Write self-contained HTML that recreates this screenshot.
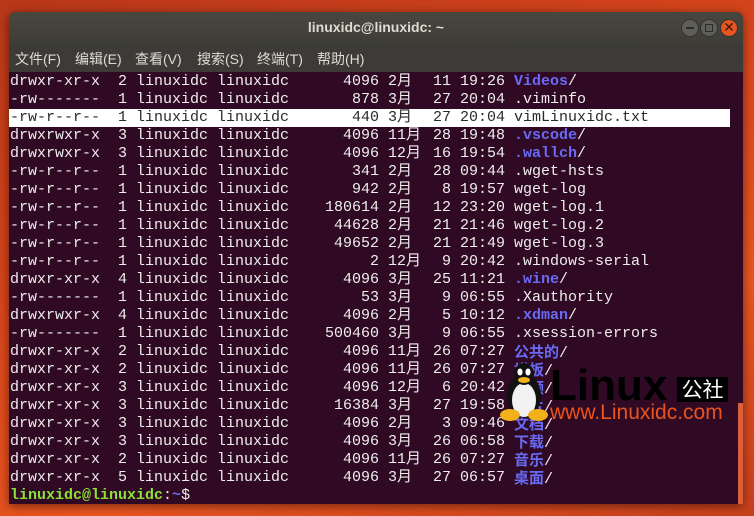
<!DOCTYPE html>
<html><head><meta charset="utf-8"><style>
*{margin:0;padding:0}
body{width:754px;height:516px;overflow:hidden;position:relative;background:linear-gradient(160deg,#b8371a 0%,#d8461c 40%,#e95420 70%,#c8401c 100%);font-family:"Liberation Sans","Noto Sans CJK SC",sans-serif}
.win{position:absolute;left:9px;top:12px;width:734px;height:492px;background:#300a24;border-radius:7px 7px 0 0;overflow:hidden;box-shadow:0 2px 10px rgba(0,0,0,.5)}
.title{position:absolute;left:0;top:0;width:734px;height:34px;background:linear-gradient(#48473f,#3d3c37);color:#dfdbd2;font-size:14px;font-weight:bold;text-align:center;line-height:30px}
.menu{position:absolute;left:0;top:34px;width:734px;height:26px;background:#3c3b37;color:#dfdbd2;font-size:14px;line-height:26px}
.menu span{position:absolute;top:0}
.btn{position:absolute;top:7px;width:16px;height:16px;border-radius:50%;background:#5f5e59;border:1px solid #333}
.term{position:absolute;left:0;top:60px;width:734px;height:432px}
.r{position:absolute;left:0;height:18px;width:721px;font-family:"Liberation Mono","Noto Sans CJK SC",monospace;font-size:15px;line-height:18px;color:#eeeeec;white-space:pre}
.r span{position:absolute;top:0}
.a{left:1px}.s{left:280px;width:90px;text-align:right}.m{left:379px}.d{left:424px;width:18px;text-align:right}.t{left:451px}.f{left:505px}
.b{color:#6a6af5;font-weight:bold}
.hl{background:#fff;color:#2a2a2a}
.cj{font-family:"Noto Sans CJK SC",sans-serif;font-weight:bold}
</style></head><body>
<div class="win">
<div class="title">linuxidc@linuxidc: ~</div>
<div class="btn" style="left:672px"><div style="position:absolute;left:4px;top:7px;width:8px;height:2px;background:#2b2b2b"></div></div>
<div class="btn" style="left:691px"><div style="position:absolute;left:4px;top:4px;width:6px;height:6px;border:1px solid #2b2b2b"></div></div>
<div class="btn" style="left:711px;background:#e9541f;color:#3a1a10;font-size:14px;line-height:15px;text-align:center">✕</div>
<div class="menu"><span style="left:6px">文件(F)</span><span style="left:66px">编辑(E)</span><span style="left:126px">查看(V)</span><span style="left:188px">搜索(S)</span><span style="left:248px">终端(T)</span><span style="left:308px">帮助(H)</span></div>
<div class="term">
<div class="r" style="top:1px"><span class="a">drwxr-xr-x  2 linuxidc linuxidc</span><span class="s">4096</span><span class="m">2月</span><span class="d">11</span><span class="t">19:26</span><span class="f"><b class="b">Videos</b>/</span></div>
<div class="r" style="top:19px"><span class="a">-rw-------  1 linuxidc linuxidc</span><span class="s">878</span><span class="m">3月</span><span class="d">27</span><span class="t">20:04</span><span class="f">.viminfo</span></div>
<div class="r hl" style="top:37px"><span class="a">-rw-r--r--  1 linuxidc linuxidc</span><span class="s">440</span><span class="m">3月</span><span class="d">27</span><span class="t">20:04</span><span class="f">vimLinuxidc.txt</span></div>
<div class="r" style="top:55px"><span class="a">drwxrwxr-x  3 linuxidc linuxidc</span><span class="s">4096</span><span class="m">11月</span><span class="d">28</span><span class="t">19:48</span><span class="f"><b class="b">.vscode</b>/</span></div>
<div class="r" style="top:73px"><span class="a">drwxrwxr-x  3 linuxidc linuxidc</span><span class="s">4096</span><span class="m">12月</span><span class="d">16</span><span class="t">19:54</span><span class="f"><b class="b">.wallch</b>/</span></div>
<div class="r" style="top:91px"><span class="a">-rw-r--r--  1 linuxidc linuxidc</span><span class="s">341</span><span class="m">2月</span><span class="d">28</span><span class="t">09:44</span><span class="f">.wget-hsts</span></div>
<div class="r" style="top:109px"><span class="a">-rw-r--r--  1 linuxidc linuxidc</span><span class="s">942</span><span class="m">2月</span><span class="d">8</span><span class="t">19:57</span><span class="f">wget-log</span></div>
<div class="r" style="top:127px"><span class="a">-rw-r--r--  1 linuxidc linuxidc</span><span class="s">180614</span><span class="m">2月</span><span class="d">12</span><span class="t">23:20</span><span class="f">wget-log.1</span></div>
<div class="r" style="top:145px"><span class="a">-rw-r--r--  1 linuxidc linuxidc</span><span class="s">44628</span><span class="m">2月</span><span class="d">21</span><span class="t">21:46</span><span class="f">wget-log.2</span></div>
<div class="r" style="top:163px"><span class="a">-rw-r--r--  1 linuxidc linuxidc</span><span class="s">49652</span><span class="m">2月</span><span class="d">21</span><span class="t">21:49</span><span class="f">wget-log.3</span></div>
<div class="r" style="top:181px"><span class="a">-rw-r--r--  1 linuxidc linuxidc</span><span class="s">2</span><span class="m">12月</span><span class="d">9</span><span class="t">20:42</span><span class="f">.windows-serial</span></div>
<div class="r" style="top:199px"><span class="a">drwxr-xr-x  4 linuxidc linuxidc</span><span class="s">4096</span><span class="m">3月</span><span class="d">25</span><span class="t">11:21</span><span class="f"><b class="b">.wine</b>/</span></div>
<div class="r" style="top:217px"><span class="a">-rw-------  1 linuxidc linuxidc</span><span class="s">53</span><span class="m">3月</span><span class="d">9</span><span class="t">06:55</span><span class="f">.Xauthority</span></div>
<div class="r" style="top:235px"><span class="a">drwxrwxr-x  4 linuxidc linuxidc</span><span class="s">4096</span><span class="m">2月</span><span class="d">5</span><span class="t">10:12</span><span class="f"><b class="b">.xdman</b>/</span></div>
<div class="r" style="top:253px"><span class="a">-rw-------  1 linuxidc linuxidc</span><span class="s">500460</span><span class="m">3月</span><span class="d">9</span><span class="t">06:55</span><span class="f">.xsession-errors</span></div>
<div class="r" style="top:271px"><span class="a">drwxr-xr-x  2 linuxidc linuxidc</span><span class="s">4096</span><span class="m">11月</span><span class="d">26</span><span class="t">07:27</span><span class="f"><b class="b cj">公共的</b>/</span></div>
<div class="r" style="top:289px"><span class="a">drwxr-xr-x  2 linuxidc linuxidc</span><span class="s">4096</span><span class="m">11月</span><span class="d">26</span><span class="t">07:27</span><span class="f"><b class="b cj">模板</b>/</span></div>
<div class="r" style="top:307px"><span class="a">drwxr-xr-x  3 linuxidc linuxidc</span><span class="s">4096</span><span class="m">12月</span><span class="d">6</span><span class="t">20:42</span><span class="f"><b class="b cj">视频</b>/</span></div>
<div class="r" style="top:325px"><span class="a">drwxr-xr-x  3 linuxidc linuxidc</span><span class="s">16384</span><span class="m">3月</span><span class="d">27</span><span class="t">19:58</span><span class="f"><b class="b cj">图片</b>/</span></div>
<div class="r" style="top:343px"><span class="a">drwxr-xr-x  3 linuxidc linuxidc</span><span class="s">4096</span><span class="m">2月</span><span class="d">3</span><span class="t">09:46</span><span class="f"><b class="b cj">文档</b>/</span></div>
<div class="r" style="top:361px"><span class="a">drwxr-xr-x  3 linuxidc linuxidc</span><span class="s">4096</span><span class="m">3月</span><span class="d">26</span><span class="t">06:58</span><span class="f"><b class="b cj">下载</b>/</span></div>
<div class="r" style="top:379px"><span class="a">drwxr-xr-x  2 linuxidc linuxidc</span><span class="s">4096</span><span class="m">11月</span><span class="d">26</span><span class="t">07:27</span><span class="f"><b class="b cj">音乐</b>/</span></div>
<div class="r" style="top:397px"><span class="a">drwxr-xr-x  5 linuxidc linuxidc</span><span class="s">4096</span><span class="m">3月</span><span class="d">27</span><span class="t">06:57</span><span class="f"><b class="b cj">桌面</b>/</span></div>
<div class="r" style="top:415px"><span class="a"><b style="color:#8ae234">linuxidc@linuxidc</b>:<b style="color:#6a6af5">~</b>$</span></div>
<div style="position:absolute;left:729px;top:331px;width:5px;height:101px;background:#d9603a"></div>
</div>
<div style="position:absolute;left:541px;top:352px;font:bold 44px/44px 'Liberation Sans',sans-serif;color:#000">Linux</div>
<div style="position:absolute;left:668px;top:365px;width:51px;height:25px;background:#000;color:#fff;font:21px/25px 'Noto Sans CJK SC',sans-serif;text-align:center">公社</div>
<div style="position:absolute;left:541px;top:390px;font:21px/22px 'Liberation Sans',sans-serif;color:#e8541c">www.Linuxidc.com</div>
<svg style="position:absolute;left:490px;top:348px" width="50" height="62" viewBox="0 0 50 62">
<ellipse cx="25" cy="36" rx="17" ry="22" fill="#111"/>
<ellipse cx="25" cy="40" rx="12" ry="17" fill="#f2f2f2"/>
<ellipse cx="25" cy="14" rx="10" ry="11" fill="#111"/>
<ellipse cx="21" cy="12" rx="2.6" ry="3.5" fill="#fff"/><ellipse cx="29" cy="12" rx="2.6" ry="3.5" fill="#fff"/>
<ellipse cx="25" cy="20" rx="6" ry="3" fill="#f2b01a"/>
<ellipse cx="11" cy="55" rx="10" ry="6" fill="#f2b01a"/><ellipse cx="39" cy="55" rx="10" ry="6" fill="#f2b01a"/>
</svg>
</div>
</body></html>
